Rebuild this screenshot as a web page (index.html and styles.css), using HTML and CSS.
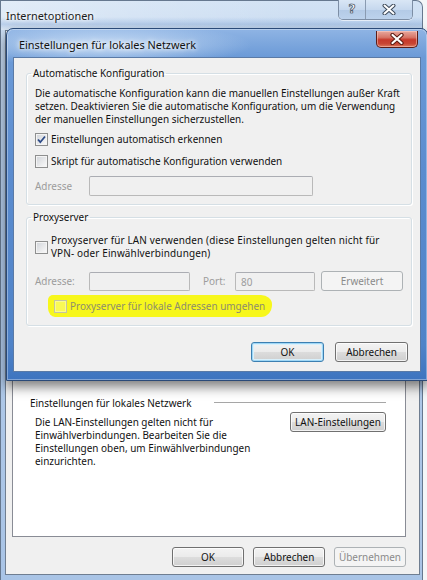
FILE: index.html
```html
<!DOCTYPE html>
<html lang="de">
<head>
<meta charset="utf-8">
<title>Internetoptionen</title>
<link rel="stylesheet" href="styles.css">
</head>
<body>
<div class="outer">
  <div class="titlebar">
    <span class="title">Internetoptionen</span>
    <div class="caps">
      <span class="cap help">?</span>
      <span class="cap close">
        <svg width="14" height="11" viewBox="0 0 14 11"><path d="M2.5 1.5 L11.5 9.5 M11.5 1.5 L2.5 9.5" stroke="#3d4a5a" stroke-width="4" stroke-linecap="round"/><path d="M2.5 1.5 L11.5 9.5 M11.5 1.5 L2.5 9.5" stroke="#fff" stroke-width="2" stroke-linecap="round"/></svg>
      </span>
    </div>
  </div>
  <div class="client">
    <div class="page">
      <section class="lan">
        <div class="lan-head"><span>Einstellungen für lokales Netzwerk</span><i class="rule"></i></div>
        <div class="lan-body">
          <p>Die LAN-Einstellungen gelten nicht für<br>Einwählverbindungen. Bearbeiten Sie die<br>Einstellungen oben, um Einwählverbindungen<br>einzurichten.</p>
          <button class="btn lanbtn">LAN-Einstellungen</button>
        </div>
      </section>
    </div>
    <div class="actions">
      <button class="btn">OK</button>
      <button class="btn">Abbrechen</button>
      <button class="btn disabled">Übernehmen</button>
    </div>
  </div>
</div>

<div class="dialog">
  <div class="dtitlebar">
    <span class="dtitle">Einstellungen für lokales Netzwerk</span>
    <span class="redclose">
      <svg width="16" height="12" viewBox="0 0 16 12"><path d="M3.5 2 L12.5 10 M12.5 2 L3.5 10" stroke="#5a1a12" stroke-width="4.2" stroke-linecap="round"/><path d="M3.5 2 L12.5 10 M12.5 2 L3.5 10" stroke="#fff" stroke-width="2.2" stroke-linecap="round"/></svg>
    </span>
  </div>
  <div class="dclient">
    <fieldset class="group g1">
      <legend>Automatische Konfiguration</legend>
      <p class="intro">Die automatische Konfiguration kann die manuellen Einstellungen außer Kraft<br>setzen. Deaktivieren Sie die automatische Konfiguration, um die Verwendung<br>der manuellen Einstellungen sicherzustellen.</p>
      <label class="cb row1"><span class="box checked"><svg width="11" height="11" viewBox="0 0 11 11"><path d="M2 5.5 L4.3 8.2 L9 2.5" fill="none" stroke="#2c4a86" stroke-width="1.8"/></svg></span><span>Einstellungen automatisch erkennen</span></label>
      <label class="cb row2"><span class="box"></span><span>Skript für automatische Konfiguration verwenden</span></label>
      <div class="addr">
        <span class="lbl dis">Adresse</span>
        <span class="field wide"></span>
      </div>
    </fieldset>

    <fieldset class="group g2">
      <legend>Proxyserver</legend>
      <label class="cb multi"><span class="box"></span><span class="ptext">Proxyserver für LAN verwenden (diese Einstellungen gelten nicht für<br>VPN- oder Einwählverbindungen)</span></label>
      <div class="proxyrow">
        <span class="lbl dis">Adresse:</span>
        <span class="field paddr"></span>
        <span class="lbl dis port">Port:</span>
        <span class="field pport">80</span>
        <button class="btn disabled erw">Erweitert</button>
      </div>
      <div class="hlwrap">
        <label class="cb hl"><span class="box dbox"></span><span class="dis2">Proxyserver für lokale Adressen umgehen</span></label>
      </div>
    </fieldset>

    <div class="dactions">
      <button class="btn default">OK</button>
      <button class="btn">Abbrechen</button>
    </div>
  </div>
</div>
</body>
</html>
```

FILE: styles.css
```css
* { box-sizing: border-box; margin: 0; padding: 0; }
html, body { width: 427px; height: 580px; overflow: hidden; }
body {
  position: relative;
  background: #f4f6f8;
  font-family: "Noto Sans", "Open Sans", sans-serif;
  font-size: 9.95px;
  line-height: 13px;
  color: #111;
}

/* ---------- outer window ---------- */
.outer {
  width: 423px;
  height: 580px;
  display: flex;
  flex-direction: column;
  border: 1px solid #66788f;
  border-bottom: none;
  border-radius: 0 7px 0 0;
  background: linear-gradient(180deg, #d2e2f4 0%, #c0d5ee 12%, #b0c9e8 40%, #a9c4e6 100%);
}
.titlebar {
  height: 29px;
  display: flex;
  align-items: flex-start;
  justify-content: space-between;
  background:
    linear-gradient(180deg, rgba(255,255,255,0) 55%, rgba(120,160,215,.35) 80%, rgba(255,255,255,0) 100%),
    linear-gradient(90deg, rgba(255,255,255,.35) 0%, rgba(255,255,255,.15) 35%, rgba(255,255,255,0) 70%);
}
.title {
  margin: 8px 0 0 5px;
  font-size: 10.9px;
  color: #1b1b1b;
  text-shadow: 0 0 6px #fff, 0 0 3px #fff;
}
.caps {
  display: flex;
  margin-right: 9px;
  margin-top: -1px;
  border: 1px solid #7d8ea5;
  border-top: none;
  border-radius: 0 0 5px 5px;
  overflow: hidden;
  box-shadow: 0 1px 0 rgba(255,255,255,.6);
}
.cap {
  height: 19px;
  display: flex;
  align-items: center;
  justify-content: center;
  background: linear-gradient(180deg, #d9e6f5 0%, #c6d8ee 50%, #b3cae6 51%, #bcd2ec 100%);
}
.help {
  width: 27px;
  border-right: 1px solid #8a9bb1;
  font-family: "DejaVu Sans", sans-serif;
  font-weight: bold;
  font-size: 12px;
  color: #fff;
  -webkit-text-stroke: 0.6px #3d4a5a;
  text-shadow: 0 0 1px #3d4a5a;
}
.close { width: 46px; }

.client {
  flex: 1;
  margin: 0 2px 5px 4px;
  border: 1px solid #6f7e91;
  background: #f0f0f0;
  display: flex;
  flex-direction: column;
  padding: 0 13px 7px 6px;
}
.page {
  flex: 1;
  background: #fff;
  border: 1px solid #898c95;
  display: flex;
  flex-direction: column;
  justify-content: flex-end;
  padding: 0 19px 68px 17px;
}
.lan-head {
  display: flex;
  align-items: center;
  justify-content: space-between;
}
.rule {
  width: 172px;
  height: 1px;
  background: #a6a6a6;
  margin-top: -2px;
}
.lan-body {
  display: flex;
  justify-content: space-between;
  align-items: flex-start;
  margin-top: 2px;
}
.lan-body p {
  margin: 4px 0 0 5px;
  white-space: nowrap;
}
.lanbtn { width: 96px; }

.actions {
  display: flex;
  justify-content: flex-end;
  gap: 9px;
  margin-top: 10px;
}
.actions .btn { width: 72px; }

/* ---------- buttons ---------- */
.btn {
  height: 20px;
  font: inherit;
  color: #111;
  border: 1px solid #707070;
  border-radius: 3px;
  background: linear-gradient(180deg, #f3f3f3 0%, #ebebeb 48%, #dcdcdc 52%, #cfcfcf 100%);
  box-shadow: inset 0 0 0 1px rgba(255,255,255,.75);
  line-height: 17px;
  text-align: center;
}
.btn.disabled {
  border-color: #adb2b5;
  background: #f4f4f4;
  color: #8a8a8a;
  box-shadow: none;
}
.btn.default {
  border-color: #3c7fb1;
  box-shadow: inset 0 0 0 1px #9fd7f6, inset 0 0 0 2px #d9f0fb;
  background: linear-gradient(180deg, #f3f3f3 0%, #ebebeb 48%, #dcdcdc 52%, #cfcfcf 100%);
}

/* ---------- dialog ---------- */
.dialog {
  position: absolute;
  left: 6px;
  top: 28px;
  width: 422px;
  height: 353px;
  border: 1px solid #2a4a78;
  border-radius: 7px 7px 0 0;
  padding: 0 6px 8px 6px;
  display: flex;
  flex-direction: column;
  background:
    radial-gradient(ellipse 150px 22px at 95px 16px, rgba(210,228,248,.9), rgba(210,228,248,0) 100%),
    linear-gradient(180deg, #8fb4e4 0%, #6b9ad7 8%, #5b8ccf 40%, #4f83c8 90%, #3e74bf 100%);
  box-shadow: 0 6px 12px rgba(0,0,0,.5), inset 0 0 0 1px rgba(255,255,255,.35);
}
.dtitlebar {
  height: 28px;
  display: flex;
  align-items: flex-start;
  justify-content: space-between;
}
.dtitle {
  margin: 9px 0 0 6px;
  font-size: 10.9px;
  color: #111;
  text-shadow: 0 0 7px #fff, 0 0 4px #fff;
}
.redclose {
  width: 42px;
  height: 17px;
  margin: 2px 3px 0 0;
  border: 1px solid #5c1d18;
  border-top: none;
  border-radius: 0 0 5px 5px;
  display: flex;
  align-items: center;
  justify-content: center;
  background: linear-gradient(180deg, #e8a99f 0%, #d77567 40%, #c6392b 55%, #c84634 80%, #dc7a5f 100%);
  box-shadow: inset 0 0 0 1px rgba(255,220,210,.45);
}
.dclient {
  flex: 1;
  background: #f0f0f0;
  border: 1px solid #5a7aa6;
  padding: 9px 8px 0 12px;
  display: flex;
  flex-direction: column;
}

.group {
  border: 1px solid #d5dfe5;
  border-radius: 3px;
  padding: 0 8px 8px 8px;
  box-shadow: inset 1px 1px 0 #fff, 1px 1px 0 #fff;
}
.group legend {
  margin-left: -4px;
  padding: 0 2px;
  line-height: 13px;
}
.g2 { margin-top: 6px; }
.intro { margin-top: 7px; white-space: nowrap; }

.cb {
  display: flex;
  align-items: center;
  height: 13px;
  white-space: nowrap;
}
.cb .box { margin-right: 3px; }
.row1 { margin-top: 7px; }
.row2 { margin-top: 9px; }
.box {
  flex: none;
  width: 13px;
  height: 13px;
  border: 1px solid #8e8f8f;
  background: linear-gradient(135deg, #cfd3d8 0%, #e8e9eb 55%, #fbfbfb 100%);
  box-shadow: inset 0 0 0 1px #f4f4f4;
  display: flex;
  align-items: center;
  justify-content: center;
}
.box.dbox {
  border-color: #c4c4a0;
  background: rgba(255,255,255,.25);
  box-shadow: inset 0 0 0 1px rgba(255,255,255,.35);
}

.addr {
  display: flex;
  align-items: center;
  margin-top: 8px;
  height: 20px;
}
.lbl { width: 54px; flex: none; }
.dis { color: #9c9c9c; }
.field {
  height: 20px;
  border: 1px solid #b9b9b9;
  border-top-color: #abadb3;
  border-radius: 2px;
  background: #f0f0f0;
  color: #9c9c9c;
  padding-left: 5px;
  line-height: 18px;
}
.field.wide { width: 224px; }

.cb.multi {
  height: 26px;
  margin-top: 10px;
}
.ptext { letter-spacing: 0.15px; }
.proxyrow {
  display: flex;
  align-items: center;
  margin-top: 11px;
  height: 20px;
}
.paddr { width: 101px; height: 19px; }
.port { width: 32px; margin-left: 13px; }
.pport { width: 80px; height: 19px; }
.erw { width: 82px; margin-left: 6px; }

.hlwrap {
  margin-top: 4px;
  margin-left: 13px;
  display: flex;
}
.cb.hl {
  height: 22px;
  padding: 0 7px 0 6px;
  background: #f7f71c;
  border-radius: 5px 11px 11px 7px / 5px 9px 12px 9px;
}
.dis2 { color: #8d8d6c; }

.dactions {
  display: flex;
  justify-content: flex-end;
  gap: 11px;
  margin-top: 16px;
  padding-right: 4px;
}
.dactions .btn { width: 73px; }
```
